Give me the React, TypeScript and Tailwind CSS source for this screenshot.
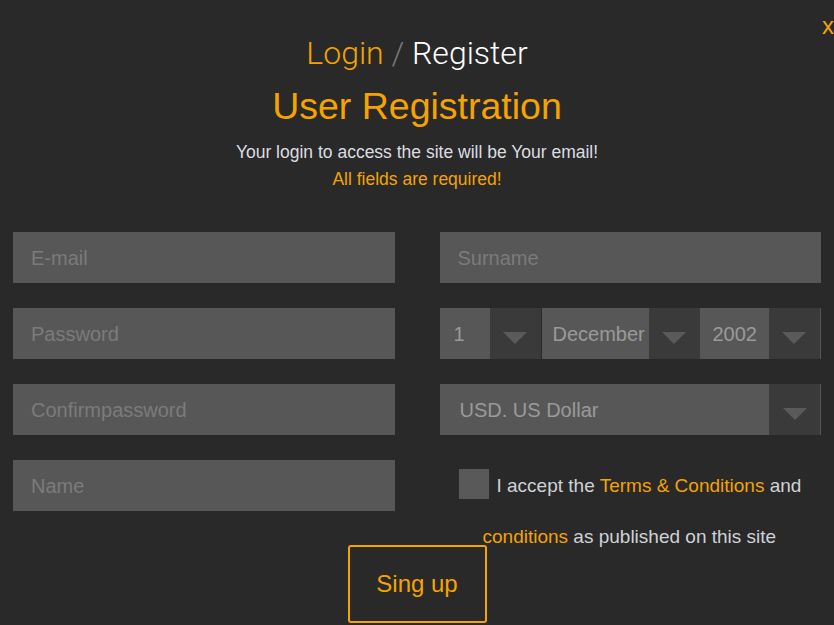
import React from 'react';

const ORANGE = 'text-[#f4a300]';

function Field({ placeholder }: { placeholder: string }) {
  return (
    <div className="h-[51px] bg-[#575757] flex items-center px-[18px] text-[20px] text-[#7b7b7b]">
      {placeholder}
    </div>
  );
}

function Arrow({ className = '' }: { className?: string }) {
  return (
    <div className={`w-[51px] h-full bg-[#3a3a3a] flex items-center justify-center shrink-0 ${className}`}>
      <svg width="24" height="12" viewBox="0 0 24 12" className="mt-[8px]">
        <polygon points="0,0 24,0 12,12" fill="#5a5a5a" />
      </svg>
    </div>
  );
}

function SelectBox({ value, width, pad }: { value: string; width: string; pad: string }) {
  return (
    <div className="flex h-full">
      <div className={`${width} ${pad} h-full bg-[#575757] flex items-center text-[20px] text-[#9a9a9a]`}>
        {value}
      </div>
      <Arrow />
    </div>
  );
}

export default function App() {
  return (
    <div
      className="relative w-[834px] h-[625px] overflow-hidden bg-[#292929]"
      style={{ fontFamily: '"Liberation Sans", Arial, sans-serif' }}
    >
      <span className={`absolute left-[822px] top-[14px] text-[24px] leading-[24px] ${ORANGE}`}>x</span>

      <div className="flex flex-col items-center">
        <h2
          className="mt-[37px] text-[32px] leading-[32px] font-light"
          style={{ fontFamily: 'Roboto, "Liberation Sans", sans-serif' }}
        >
          <span className={ORANGE}>Login</span>
          <span className="text-[#777]"> / </span>
          <span className="text-white">Register</span>
        </h2>
        <h1 className={`mt-[19px] text-[37.5px] leading-[37px] ${ORANGE}`}>User Registration</h1>
        <p className="mt-[19px] text-[17.5px] leading-[17px] text-[#dcdde0]">
          Your login to access the site will be Your email!
        </p>
        <p className={`mt-[10px] text-[17.5px] leading-[17px] ${ORANGE}`}>All fields are required!</p>
      </div>

      <div className="mt-[44px] px-[13px] grid grid-cols-2 gap-x-[45px] gap-y-[25px]">
        <Field placeholder="E-mail" />
        <Field placeholder="Surname" />

        <Field placeholder="Password" />
        <div className="h-[51px] flex">
          <SelectBox value="1" width="w-[50px]" pad="pl-[14px]" />
          <div className="w-[1px]" />
          <SelectBox value="December" width="w-[107px]" pad="pl-[11px]" />
          <SelectBox value="2002" width="w-[69px]" pad="pl-[13px]" />
          <div className="w-[1px] h-full bg-[#555]" />
        </div>

        <Field placeholder="Confirmpassword" />
        <div className="h-[51px] flex">
          <div className="flex-1 h-full bg-[#575757] flex items-center pl-[20px] text-[20px] text-[#9a9a9a]">
            USD. US Dollar
          </div>
          <Arrow />
          <div className="w-[1px] h-full bg-[#555]" />
        </div>

        <Field placeholder="Name" />
        <div className="h-[51px]">
          <p className="pl-[43px] text-[19px] leading-[51px] text-[#cfd2d6]">
            <span className="inline-block w-[30px] h-[30px] bg-[#595959] ml-[-24px] mr-[8px] align-[-7px]" />I accept the{' '}
            <span className={ORANGE}>Terms &amp; Conditions</span> and{' '}
            <span className={ORANGE}>conditions</span> as published on this site
          </p>
        </div>
      </div>

      <div className="flex justify-center mt-[34px]">
        <button
          type="button"
          className={`w-[139px] h-[78px] border-2 border-[#f4a300] rounded-[3px] text-[24px] ${ORANGE}`}
        >
          Sing up
        </button>
      </div>
    </div>
  );
}
